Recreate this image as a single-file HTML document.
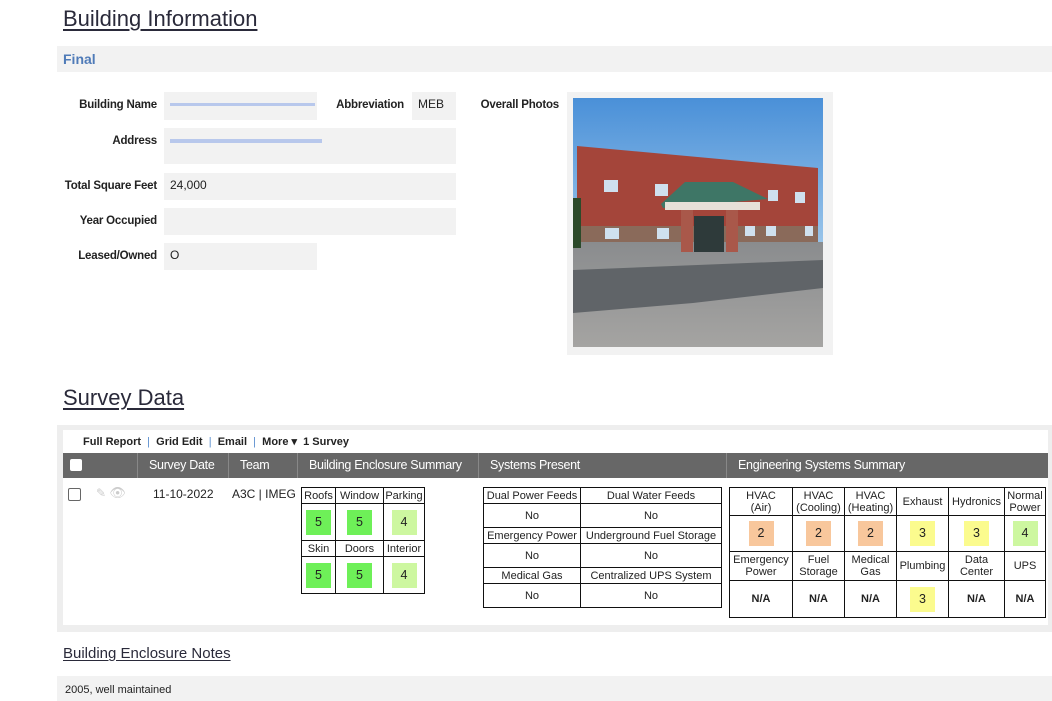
<!DOCTYPE html>
<html><head><meta charset="utf-8"><style>
*{margin:0;padding:0;box-sizing:border-box}
body{width:1052px;height:701px;background:#fff;font-family:"Liberation Sans",sans-serif;color:#222;position:relative;overflow:hidden}
.a{position:absolute}
.h{font-size:22px;color:#2a2a3a;text-decoration:underline;text-decoration-thickness:2px;text-underline-offset:3px}
.lbl{font-size:11.5px;font-weight:bold;text-align:right;width:150px;letter-spacing:-0.2px}
.box{background:#f2f2f2;font-size:12px;padding:5px 6px}
table{border-collapse:collapse;position:absolute;font-size:11px;text-align:center}
td{border:1px solid #111;padding:0;line-height:12px}
.sq{display:inline-block;width:25px;height:25px;line-height:25px;font-size:12.5px}
.g{background:#6ef058}.lg{background:#cdf7a0}.o{background:#f8c79c}.y{background:#fbfb8e}
.th{color:#fff;font-size:12.5px;top:453px;height:25px;line-height:25px;border-left:1px solid #888;padding-left:11px;letter-spacing:-0.3px}
</style></head><body>
<div class="a h" style="left:63px;top:6px">Building Information</div>
<div class="a" style="left:57px;top:46px;width:995px;height:26px;background:#f2f2f2"></div>
<div class="a" style="left:63px;top:51px;font-size:14px;font-weight:bold;color:#4f7bb8">Final</div>

<div class="a lbl" style="left:7px;top:99px">Building Name</div>
<div class="a box" style="left:164px;top:92px;width:153px;height:28px"><div style="margin-top:6px;height:3px;width:145px;background:#b8c8ec"></div></div>
<div class="a lbl" style="left:254px;top:99px">Abbreviation</div>
<div class="a box" style="left:412px;top:92px;width:44px;height:28px">MEB</div>
<div class="a lbl" style="left:7px;top:135px">Address</div>
<div class="a box" style="left:164px;top:128px;width:292px;height:36px"><div style="margin-top:6px;height:4px;width:152px;background:#b8c8ec"></div></div>
<div class="a lbl" style="left:7px;top:180px">Total Square Feet</div>
<div class="a box" style="left:164px;top:173px;width:292px;height:27px">24,000</div>
<div class="a lbl" style="left:7px;top:215px">Year Occupied</div>
<div class="a box" style="left:164px;top:208px;width:292px;height:27px"></div>
<div class="a lbl" style="left:7px;top:250px">Leased/Owned</div>
<div class="a box" style="left:164px;top:243px;width:153px;height:27px">O</div>
<div class="a lbl" style="left:409px;top:99px">Overall Photos</div>

<div class="a" style="left:567px;top:92px;width:266px;height:263px;background:#f2f2f2"></div>
<svg class="a" style="left:573px;top:98px" width="250" height="249" viewBox="0 0 250 249">
<defs><linearGradient id="sk" x1="0" y1="0" x2="0" y2="1"><stop offset="0" stop-color="#4a90d8"/><stop offset="1" stop-color="#9cc6ea"/></linearGradient>
<linearGradient id="pv" x1="0" y1="0" x2="0" y2="1"><stop offset="0" stop-color="#8a8c8e"/><stop offset="1" stop-color="#a5a4a2"/></linearGradient></defs>
<rect width="250" height="150" fill="url(#sk)"/>
<polygon points="4,48 245,70 245,144 4,144" fill="#a4453a"/>
<rect x="4" y="128" width="241" height="16" fill="#8a6a5a"/>
<rect x="0" y="144" width="250" height="105" fill="url(#pv)"/>
<polygon points="0,172 250,162 250,190 120,205 0,215" fill="#606468"/>
<g fill="#cfe0ee"><rect x="31" y="82" width="14" height="12"/><rect x="82" y="86" width="13" height="12"/><rect x="195" y="92" width="10" height="11"/><rect x="222" y="94" width="10" height="11"/><rect x="32" y="130" width="14" height="11"/><rect x="84" y="130" width="12" height="11"/><rect x="172" y="128" width="10" height="10"/><rect x="193" y="128" width="10" height="10"/><rect x="232" y="128" width="8" height="10"/></g>
<polygon points="88,106 112,84 160,84 195,101 160,104 90,110" fill="#3e7666"/>
<rect x="92" y="104" width="95" height="8" fill="#e6e0d8"/>
<rect x="108" y="112" width="12" height="42" fill="#a9584a"/>
<rect x="153" y="112" width="12" height="42" fill="#a9584a"/>
<rect x="121" y="118" width="30" height="36" fill="#2e3a3a"/>
<rect x="0" y="100" width="8" height="50" fill="#2c4a2a"/>
</svg>

<div class="a h" style="left:63px;top:385px">Survey Data</div>
<div class="a" style="left:57px;top:425px;width:995px;height:207px;background:#eeeeee"></div>
<div class="a" style="left:63px;top:430px;width:985px;height:195px;background:#fff"></div>
<div class="a" style="left:83px;top:435px;font-size:11px;font-weight:bold;color:#222">Full Report <span style="color:#5b8fcf;font-weight:normal">&nbsp;|&nbsp;</span> Grid Edit <span style="color:#5b8fcf;font-weight:normal">&nbsp;|&nbsp;</span> Email <span style="color:#5b8fcf;font-weight:normal">&nbsp;|&nbsp;</span> More ▾ &nbsp;1 Survey</div>
<div class="a" style="left:63px;top:453px;width:985px;height:25px;background:#676767"></div>
<div class="a" style="left:70px;top:459px;width:12px;height:12px;background:#fff;border-radius:2px"></div>
<div class="a th" style="left:137px;width:91px">Survey Date</div>
<div class="a th" style="left:228px;width:69px">Team</div>
<div class="a th" style="left:297px;width:181px">Building Enclosure Summary</div>
<div class="a th" style="left:478px;width:248px">Systems Present</div>
<div class="a th" style="left:726px;width:322px">Engineering Systems Summary</div>

<div class="a" style="left:68px;top:488px;width:13px;height:13px;border:1px solid #666;border-radius:2px"></div>
<div class="a" style="left:96px;top:485px;font-size:12px;color:#ccc">✎ <span style="font-size:13px">👁</span></div>
<div class="a" style="left:153px;top:487px;font-size:12px">11-10-2022</div>
<div class="a" style="left:232px;top:487px;font-size:12px">A3C | IMEG</div>

<table style="left:301px;top:487px;width:124px">
<tr style="height:16px"><td style="width:34px">Roofs</td><td style="width:48px">Window</td><td>Parking</td></tr>
<tr style="height:37px"><td><span class="sq g">5</span></td><td><span class="sq g">5</span></td><td><span class="sq lg">4</span></td></tr>
<tr style="height:16px"><td>Skin</td><td>Doors</td><td>Interior</td></tr>
<tr style="height:37px"><td><span class="sq g">5</span></td><td><span class="sq g">5</span></td><td><span class="sq lg">4</span></td></tr>
</table>

<table style="left:483px;top:487px;width:239px;font-size:11px">
<tr style="height:16px"><td style="width:97px">Dual Power Feeds</td><td>Dual Water Feeds</td></tr>
<tr style="height:24px"><td>No</td><td>No</td></tr>
<tr style="height:16px"><td>Emergency Power</td><td>Underground Fuel Storage</td></tr>
<tr style="height:24px"><td>No</td><td>No</td></tr>
<tr style="height:16px"><td>Medical Gas</td><td>Centralized UPS System</td></tr>
<tr style="height:24px"><td>No</td><td>No</td></tr>
</table>

<table style="left:729px;top:487px;width:317px">
<tr style="height:28px"><td style="width:63px">HVAC<br>(Air)</td><td style="width:52px">HVAC<br>(Cooling)</td><td style="width:52px">HVAC<br>(Heating)</td><td style="width:52px">Exhaust</td><td style="width:56px">Hydronics</td><td>Normal<br>Power</td></tr>
<tr style="height:36px"><td><span class="sq o">2</span></td><td><span class="sq o">2</span></td><td><span class="sq o">2</span></td><td><span class="sq y">3</span></td><td><span class="sq y">3</span></td><td><span class="sq lg">4</span></td></tr>
<tr style="height:29px"><td>Emergency<br>Power</td><td>Fuel<br>Storage</td><td>Medical<br>Gas</td><td>Plumbing</td><td>Data<br>Center</td><td>UPS</td></tr>
<tr style="height:37px;font-weight:bold"><td>N/A</td><td>N/A</td><td>N/A</td><td><span class="sq y" style="font-weight:normal">3</span></td><td>N/A</td><td>N/A</td></tr>
</table>

<div class="a" style="left:63px;top:645px;font-size:15px;color:#2a2a3a;text-decoration:underline;text-underline-offset:2px">Building Enclosure Notes</div>
<div class="a" style="left:57px;top:676px;width:995px;height:25px;background:#f2f2f2;font-size:11px;padding:8px 0 0 8px">2005, well maintained</div>
</body></html>
